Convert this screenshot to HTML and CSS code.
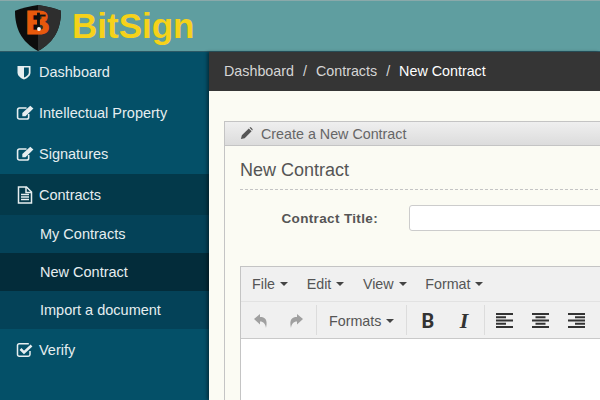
FILE: index.html
```html
<!DOCTYPE html>
<html>
<head>
  <title>BitSign</title>
  <link rel="stylesheet" href="styles.css">
</head>
<body>
  <header class="topbar">
    <svg class="logo" viewBox="0 0 48 48" width="46" height="46">
      <path d="M0 6 C8 3 16 1 24 0 C32 1 40 3 48 6 C48 24 42 38 24 48 C6 38 0 24 0 6 Z" fill="#0d0d0d"/>
      <path d="M24 0 C32 1 40 3 48 6 C48 24 42 38 24 48 Z" fill="#2e2e2e"/>
      <text class="logo-b" x="11" y="30">B</text>
      <rect x="23" y="8" width="3" height="18" fill="#111"/>
      <rect x="26" y="10" width="6" height="2" fill="#111"/>
      <circle cx="25" cy="25" r="2" fill="#fff"/>
    </svg>
    <span class="brand">BitSign</span>
  </header>

  <div class="layout">
    <nav class="sidebar">
      <a class="nav-item">
        <span class="icon-box"><svg viewBox="0 0 16 16" width="16" height="17"><path d="M1.500 1.500 H14.500 V8 C14.500 11.500 11 13.800 8 15 C5 13.800 1.500 11.500 1.500 8 Z" fill="#e6eef0"/><path d="M8 3 H12.800 V8 C12.800 10.400 10.200 12.200 8 13.100 Z" fill="#045068"/></svg></span>
        Dashboard
      </a>
      <a class="nav-item">
        <span class="icon-box"><svg viewBox="0 0 18 16" width="19" height="17"><path d="M12 9.500 V12.500 C12 13.500 11.300 14.200 10.300 14.200 H3.200 C2.200 14.200 1.500 13.500 1.500 12.500 V5.500 C1.500 4.500 2.200 3.800 3.200 3.800 H10" fill="none" stroke="#e6eef0" stroke-width="1.500"/><path d="M6 8.500 L13.500 1.500 L16.500 4.200 L9 11.500 H6 Z" fill="#e6eef0"/></svg></span>
        Intellectual Property
      </a>
      <a class="nav-item">
        <span class="icon-box"><svg viewBox="0 0 18 16" width="19" height="17"><path d="M12 9.500 V12.500 C12 13.500 11.300 14.200 10.300 14.200 H3.200 C2.200 14.200 1.500 13.500 1.500 12.500 V5.500 C1.500 4.500 2.200 3.800 3.200 3.800 H10" fill="none" stroke="#e6eef0" stroke-width="1.500"/><path d="M6 8.500 L13.500 1.500 L16.500 4.200 L9 11.500 H6 Z" fill="#e6eef0"/></svg></span>
        Signatures
      </a>
      <div class="nav-group">
        <a class="nav-item">
          <span class="icon-box"><svg viewBox="0 0 18 18" width="18" height="18"><path d="M2.500 1 H10.500 L15.500 6 V17 H2.500 Z" fill="none" stroke="#e6eef0" stroke-width="1.500"/><path d="M10 1 V6.500 H15.500" fill="none" stroke="#e6eef0" stroke-width="1.500"/><path d="M5 8.500 H13 M5 11 H13 M5 13.500 H13" stroke="#e6eef0" stroke-width="1.300"/></svg></span>
          Contracts
        </a>
        <a class="sub-item">My Contracts</a>
        <a class="sub-item active">New Contract</a>
        <a class="sub-item">Import a document</a>
      </div>
      <a class="nav-item">
        <span class="icon-box"><svg viewBox="0 0 18 16" width="18" height="16"><path d="M14 9 V12.500 C14 13.500 13.300 14.200 12.300 14.200 H3.200 C2.200 14.200 1.500 13.500 1.500 12.500 V3.500 C1.500 2.500 2.200 1.800 3.200 1.800 H12.800" fill="none" stroke="#e6eef0" stroke-width="1.500"/><path d="M4.500 7 L8 10.500 L15.500 3.500" fill="none" stroke="#e6eef0" stroke-width="2.600"/></svg></span>
        Verify
      </a>
    </nav>

    <main class="content">
      <div class="breadcrumb">
        <span>Dashboard</span><span class="sep">/</span><span>Contracts</span><span class="sep">/</span><span class="current">New Contract</span>
      </div>

      <div class="page">
        <section class="panel">
          <div class="panel-heading">
            <svg viewBox="0 0 14 14" width="13" height="13"><path d="M1 13 L2 9 L9.500 1.500 L12.500 4.500 L5 12 Z M10.300 0.800 C11 0.200 11.600 0.200 12.200 0.800 L13.200 1.800 C13.800 2.400 13.800 3 13.200 3.700 Z" fill="#555"/></svg>
            Create a New Contract
          </div>
          <div class="panel-body">
            <h2 class="form-title">New Contract</h2>
            <div class="form-row">
              <label class="form-label" for="title">Contract Title:</label>
              <input class="form-input" id="title" type="text">
            </div>

            <div class="editor">
              <div class="menubar">
                <span class="menu">File<i class="caret"></i></span>
                <span class="menu">Edit<i class="caret"></i></span>
                <span class="menu">View<i class="caret"></i></span>
                <span class="menu">Format<i class="caret"></i></span>
              </div>
              <div class="toolbar">
                <div class="tool-group">
                  <svg viewBox="0 0 16 16" width="16" height="16"><path d="M1 6 L7 1 V4 C12 4 15 6.500 13 15 C12.500 11 10.500 8.500 7 8.500 V11.500 Z" fill="#a0a0a0"/></svg>
                  <svg viewBox="0 0 16 16" width="16" height="16"><path d="M15 6 L9 1 V4 C4 4 1 6.500 3 15 C3.500 11 5.500 8.500 9 8.500 V11.500 Z" fill="#a0a0a0"/></svg>
                </div>
                <div class="tool-group">
                  <span class="menu">Formats<i class="caret"></i></span>
                </div>
                <div class="tool-group">
                  <span class="tool-text bold">B</span>
                  <span class="tool-text italic">I</span>
                </div>
                <div class="tool-group aligns">
                  <svg viewBox="0 0 17 15" width="17" height="15"><path d="M0 1 H17 M0 4.200 H10 M0 7.500 H17 M0 10.800 H10 M0 14 H17" stroke="#333" stroke-width="2"/></svg>
                  <svg viewBox="0 0 17 15" width="17" height="15"><path d="M0 1 H17 M3.500 4.200 H13.500 M0 7.500 H17 M3.500 10.800 H13.500 M0 14 H17" stroke="#333" stroke-width="2"/></svg>
                  <svg viewBox="0 0 17 15" width="17" height="15"><path d="M0 1 H17 M7 4.200 H17 M0 7.500 H17 M7 10.800 H17 M0 14 H17" stroke="#333" stroke-width="2"/></svg>
                </div>
              </div>
              <div class="editor-area"></div>
            </div>
          </div>
        </section>
      </div>
    </main>
  </div>
</body>
</html>
```

FILE: styles.css
```css
* {
  box-sizing: border-box;
}

body {
  margin: 0;
  width: 600px;
  height: 400px;
  overflow: hidden;
  display: flex;
  flex-direction: column;
  font-family: "Liberation Sans", Arial, sans-serif;
  font-size: 14.300px;
  color: #444;
}

/* top bar */
.topbar {
  flex: 0 0 52px;
  display: flex;
  align-items: center;
  gap: 11px;
  padding-left: 15px;
  background: #5f9ea0;
  border-top: 1px solid #8aa9aa;
  border-bottom: 1px solid #2c5a66;
}

.logo {
  margin-top: 4px;
}

.logo-b {
  font-family: "Liberation Sans", Arial, sans-serif;
  font-weight: bold;
  font-size: 35px;
  fill: #e8590c;
  stroke: #e8590c;
  stroke-width: 1.200px;
}

.brand {
  font-size: 35px;
  font-weight: bold;
  color: #f6d21a;
}

/* sidebar */
.layout {
  flex: 1;
  display: flex;
  min-height: 0;
}

.sidebar {
  flex: 0 0 209px;
  background: #045068;
  color: #e6eef0;
  font-size: 14.500px;
}

.nav-item {
  display: flex;
  align-items: center;
  height: 41px;
  padding-left: 16px;
}

.sidebar > .nav-item:first-child {
  height: 40px;
}

.icon-box {
  flex: 0 0 23px;
  display: flex;
  align-items: center;
}

.nav-group .nav-item {
  background: #03394a;
}

.sub-item {
  display: flex;
  align-items: center;
  height: 38px;
  padding-left: 40px;
  background: #044258;
}

.sub-item.active {
  background: #032c3a;
}

/* main area */
.content {
  flex: 1;
  min-width: 0;
  background: #fbfbf3;
  box-shadow: -2px 0 3px rgba(0, 0, 0, 0.4);
}

.breadcrumb {
  display: flex;
  align-items: center;
  height: 39px;
  padding: 0 0 2px 15px;
  background: #353535;
  color: #d5d5d5;
}

.sep {
  margin: 0 9px;
}

.current {
  color: #fff;
}

.page {
  padding: 30px 0 0 15px;
}

.panel {
  width: 500px;
  height: 400px;
  border: 1px solid #c4c4c4;
}

.panel-heading {
  display: flex;
  align-items: center;
  gap: 8px;
  height: 24px;
  padding-left: 15px;
  background: linear-gradient(#efefef, #dcdcdc);
  border-bottom: 1px solid #c4c4c4;
  color: #666;
}

.panel-body {
  padding: 0 15px;
}

.form-title {
  margin: 0;
  height: 44px;
  padding-top: 14px;
  font-size: 18px;
  font-weight: normal;
  line-height: 20px;
  color: #555;
  border-bottom: 1px dashed #c4c4c4;
}

.form-row {
  display: flex;
  align-items: center;
  height: 26px;
  margin-top: 15px;
}

.form-label {
  flex: 0 0 138px;
  text-align: right;
  font-weight: bold;
  font-size: 13.500px;
  letter-spacing: 0.350px;
  color: #555;
}

.form-input {
  margin-left: 31px;
  flex: 1;
  height: 26px;
  background: #fff;
  border: 1px solid #ccc;
  border-radius: 3px;
}

/* editor */
.editor {
  margin-top: 35px;
  border: 1px solid #c4c4c4;
}

.menubar {
  display: flex;
  align-items: center;
  gap: 18.600px;
  height: 35px;
  padding-left: 11px;
  background: #f0f0f0;
  border-bottom: 1px solid #e2e2e2;
  color: #555;
}

.menu {
  display: inline-flex;
  align-items: center;
  color: #555;
}

.caret {
  margin-left: 5px;
  border-top: 4px solid #444;
  border-left: 4px solid transparent;
  border-right: 4px solid transparent;
}

.toolbar {
  display: flex;
  align-items: center;
  height: 37px;
  background: #f0f0f0;
  border-bottom: 1px solid #c9c9c9;
}

.tool-group {
  display: flex;
  align-items: center;
  gap: 19px;
  height: 30px;
  padding: 1px 12px 0;
  border-right: 1px solid #dcdcdc;
}

.tool-group.aligns {
  padding-left: 11px;
  border-right: none;
}

.tool-text {
  width: 17px;
  text-align: center;
  color: #333;
}

.tool-text.bold {
  font-family: Roboto, sans-serif;
  font-size: 20px;
  font-weight: bold;
}

.tool-text.italic {
  font-family: "Liberation Serif", serif;
  font-style: italic;
  font-weight: bold;
  font-size: 22px;
}

.editor-area {
  height: 100px;
  background: #fff;
}
```
